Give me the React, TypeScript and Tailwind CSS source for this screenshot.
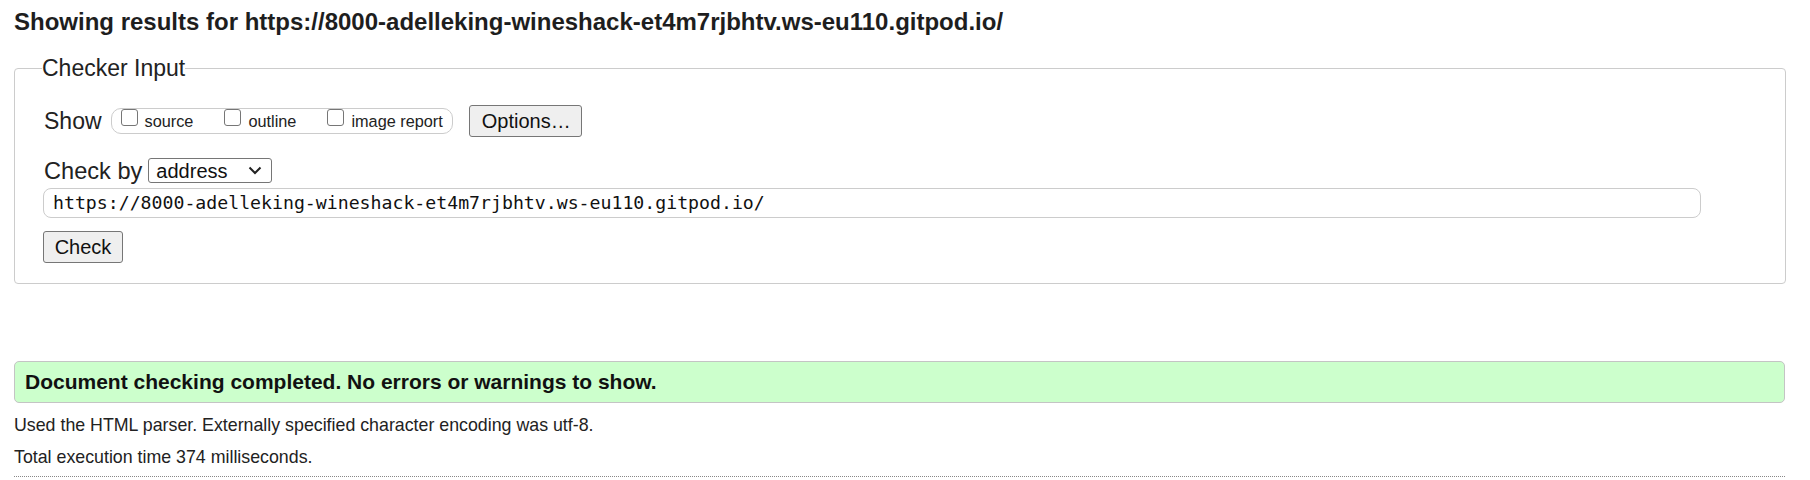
import React from "react";

function Box({ label, className }: { label: string; className?: string }) {
  return (
    <span className={"flex items-start " + (className ?? "")}>
      <span className="block w-[17px] h-[17px] border border-[#767676] rounded-[3px] bg-white" />
      <span className="ml-[7px] mt-[3px] text-[16.3px] leading-[18px]">{label}</span>
    </span>
  );
}

export default function App() {
  return (
    <div className="w-[1810px] h-[480px] bg-white text-[#222] font-['Liberation_Sans',Arial,sans-serif] pl-[14px] pr-[25px] overflow-hidden">
      <h2 className="mt-[9px] h-[25px] leading-[25px] text-[24px] font-bold text-[#1e1e1e] whitespace-nowrap">
        Showing results for https://8000-adelleking-wineshack-et4m7rjbhtv.ws-eu110.gitpod.io/
      </h2>

      <fieldset className="mt-[21px] border border-[#cccccc] rounded-[4px] pl-[27px] pr-[84px] pb-[20px] pt-0 m-0">
        <legend className="text-[23px] leading-[26px] p-0 text-[#222]">Checker Input</legend>
        <div className="ml-[2px]">
          <div className="mt-[24px] h-[32px] flex items-center">
            <span className="text-[23px] leading-[26px]">Show</span>
            <span className="ml-[9px] h-[26px] border border-[#cccccc] rounded-[10px] flex items-start pl-[9px] pr-[9px]">
              <Box label="source" />
              <Box label="outline" className="ml-[31px]" />
              <Box label="image report" className="ml-[31px]" />
            </span>
            <span className="ml-[16px] h-[32px] w-[113px] flex items-center pl-[12px] bg-[#efefef] border border-[#767676] rounded-[3px] text-[20px] text-[#111]">
              Options…
            </span>
          </div>

          <div className="mt-[21px] h-[25px] flex items-center">
            <span className="text-[23.6px] leading-[26px]">Check by</span>
            <span className="ml-[6px] h-[25px] w-[124px] border border-[#767676] rounded-[3px] flex items-center pl-[7px] pr-[5px] justify-between text-[20px] leading-[22px] text-[#111]">
              <span>address</span>
              <svg width="14" height="9" viewBox="0 0 14 9" className="mr-[4px]">
                <path d="M1.5 1.5 L7 7 L12.5 1.5" fill="none" stroke="#222" strokeWidth="2" />
              </svg>
            </span>
          </div>

          <div className="mt-[5px] h-[30px] w-[1658px] -ml-[1px] border border-[#cccccc] rounded-[8px] flex items-center pl-[9px] font-['DejaVu_Sans_Mono',monospace] text-[18.2px] text-[#111]">
            https://8000-adelleking-wineshack-et4m7rjbhtv.ws-eu110.gitpod.io/
          </div>

          <div className="mt-[13px] h-[32px] w-[80px] -ml-[1px] flex items-center justify-center bg-[#efefef] border border-[#767676] rounded-[3px] text-[20px] text-[#111]">
            Check
          </div>
        </div>
      </fieldset>

      <div className="mt-[77px] h-[42px] bg-[#ccffcc] border border-[#c4c4c4] rounded-[5px] flex items-center pl-[10px]">
        <span className="text-[21px] font-bold text-[#111]">
          Document checking completed. No errors or warnings to show.
        </span>
      </div>

      <p className="mt-[13px] text-[17.8px] leading-[18px]">
        Used the HTML parser. Externally specified character encoding was utf-8.
      </p>
      <p className="mt-[14px] text-[17.8px] leading-[18px]">Total execution time 374 milliseconds.</p>
      <div className="mt-[10px] border-t border-dotted border-[#888]" />
    </div>
  );
}
